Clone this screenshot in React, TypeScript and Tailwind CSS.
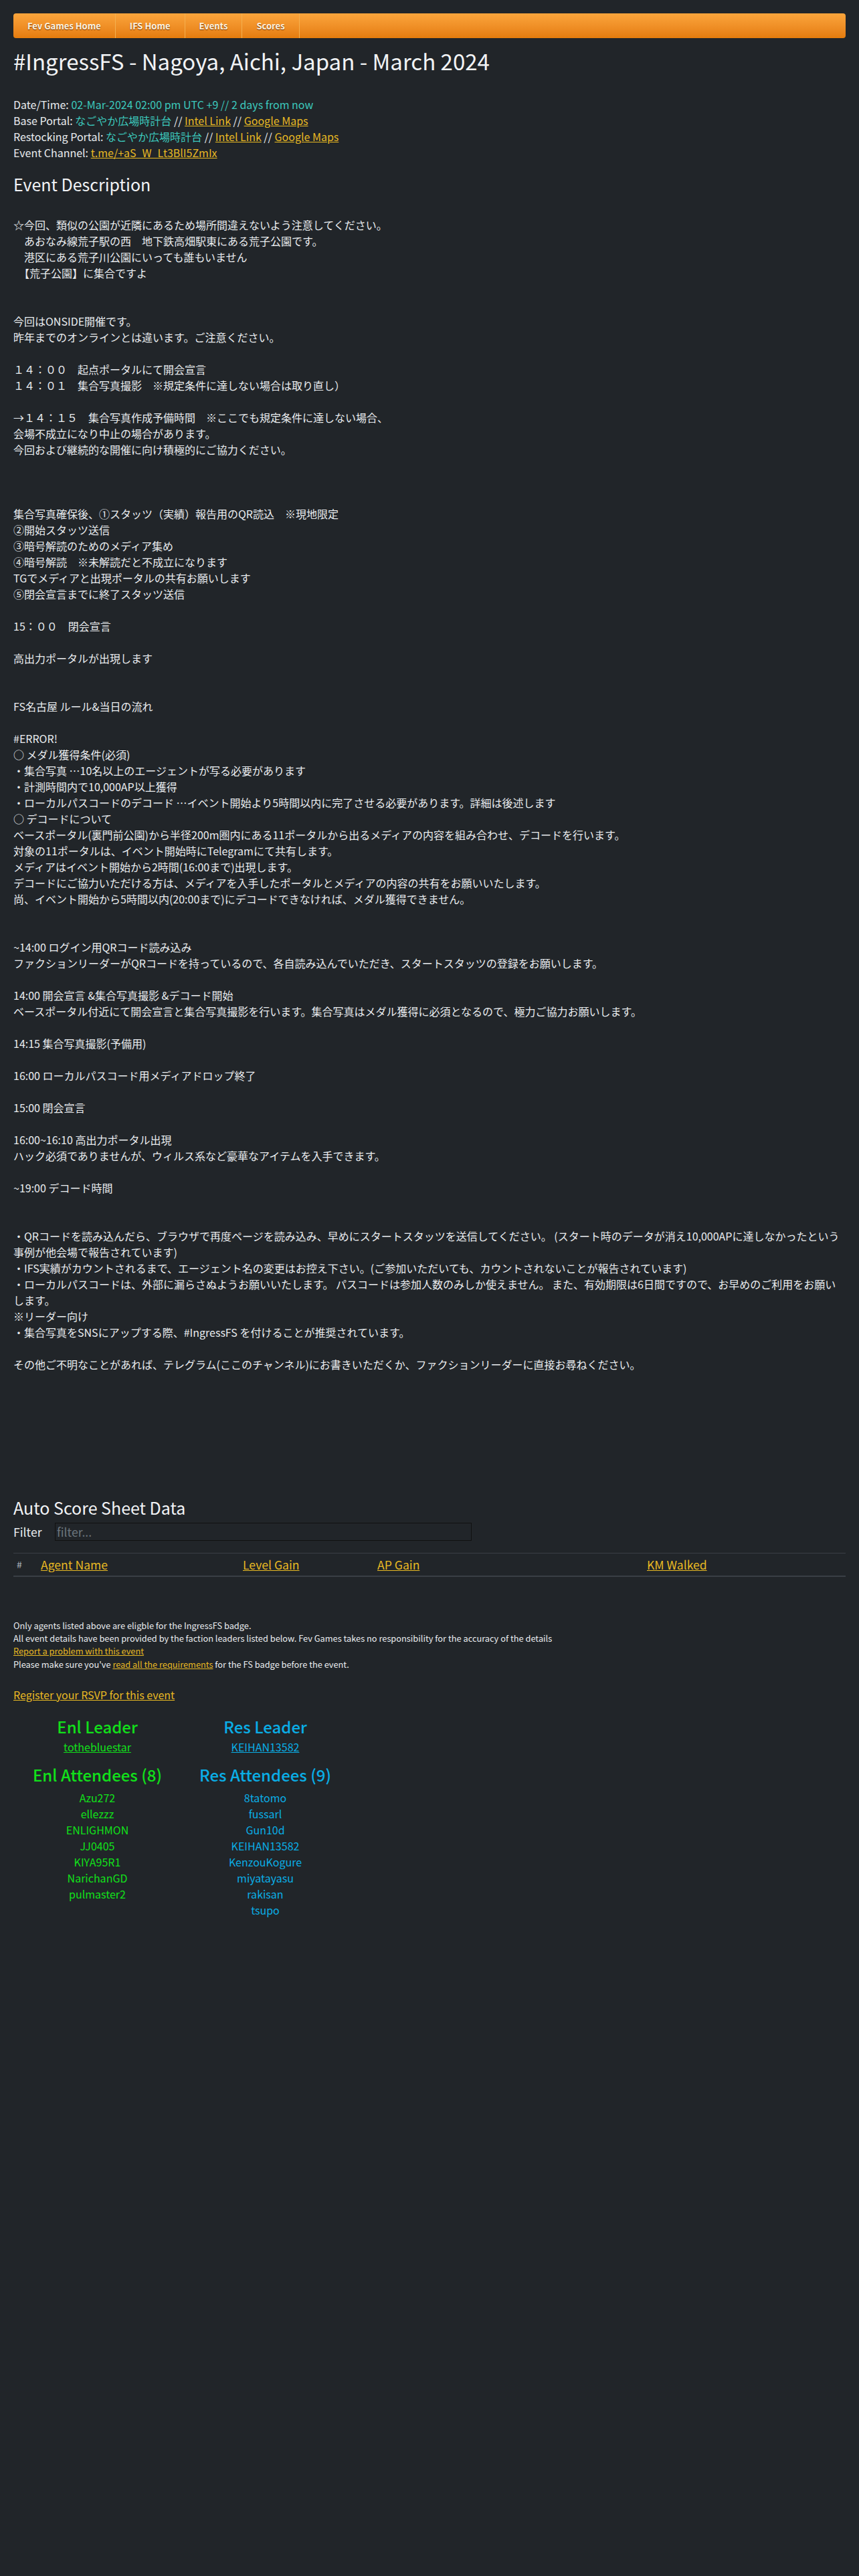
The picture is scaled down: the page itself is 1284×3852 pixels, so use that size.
import React from "react";

const desc: string[] = [
  "",
  "☆今回、類似の公園が近隣にあるため場所間違えないよう注意してください。",
  "　あおなみ線荒子駅の西　地下鉄高畑駅東にある荒子公園です。",
  "　港区にある荒子川公園にいっても誰もいません",
  "　【荒子公園】に集合ですよ",
  "",
  "",
  "今回はONSIDE開催です。",
  "昨年までのオンラインとは違います。ご注意ください。",
  "",
  "１４：００　起点ポータルにて開会宣言",
  "１４：０１　集合写真撮影　※規定条件に達しない場合は取り直し）",
  "",
  "→１４：１５　集合写真作成予備時間　※ここでも規定条件に達しない場合、",
  "会場不成立になり中止の場合があります。",
  "今回および継続的な開催に向け積極的にご協力ください。",
  "",
  "",
  "",
  "集合写真確保後、①スタッツ（実績）報告用のQR読込　※現地限定",
  "②開始スタッツ送信",
  "③暗号解読のためのメディア集め",
  "④暗号解読　※未解読だと不成立になります",
  "TGでメディアと出現ポータルの共有お願いします",
  "⑤閉会宣言までに終了スタッツ送信",
  "",
  "15：００　閉会宣言",
  "",
  "高出力ポータルが出現します",
  "",
  "",
  "FS名古屋 ルール&当日の流れ",
  "",
  "#ERROR!",
  "○ メダル獲得条件(必須)",
  "・集合写真 …10名以上のエージェントが写る必要があります",
  "・計測時間内で10,000AP以上獲得",
  "・ローカルパスコードのデコード …イベント開始より5時間以内に完了させる必要があります。詳細は後述します",
  "○ デコードについて",
  "ベースポータル(裏門前公園)から半径200m圏内にある11ポータルから出るメディアの内容を組み合わせ、デコードを行います。",
  "対象の11ポータルは、イベント開始時にTelegramにて共有します。",
  "メディアはイベント開始から2時間(16:00まで)出現します。",
  "デコードにご協力いただける方は、メディアを入手したポータルとメディアの内容の共有をお願いいたします。",
  "尚、イベント開始から5時間以内(20:00まで)にデコードできなければ、メダル獲得できません。",
  "",
  "",
  "~14:00 ログイン用QRコード読み込み",
  "ファクションリーダーがQRコードを持っているので、各自読み込んでいただき、スタートスタッツの登録をお願いします。",
  "",
  "14:00 開会宣言 &集合写真撮影 &デコード開始",
  "ベースポータル付近にて開会宣言と集合写真撮影を行います。集合写真はメダル獲得に必須となるので、極力ご協力お願いします。",
  "",
  "14:15 集合写真撮影(予備用)",
  "",
  "16:00 ローカルパスコード用メディアドロップ終了",
  "",
  "15:00 閉会宣言",
  "",
  "16:00~16:10 高出力ポータル出現",
  "ハック必須でありませんが、ウィルス系など豪華なアイテムを入手できます。",
  "",
  "~19:00 デコード時間",
  "",
  "",
  "・QRコードを読み込んだら、ブラウザで再度ページを読み込み、早めにスタートスタッツを送信してください。 (スタート時のデータが消え10,000APに達しなかったという",
  "事例が他会場で報告されています)",
  "・IFS実績がカウントされるまで、エージェント名の変更はお控え下さい。(ご参加いただいても、カウントされないことが報告されています)",
  "・ローカルパスコードは、外部に漏らさぬようお願いいたします。 パスコードは参加人数のみしか使えません。 また、有効期限は6日間ですので、お早めのご利用をお願い",
  "します。",
  "※リーダー向け",
  "・集合写真をSNSにアップする際、#IngressFS を付けることが推奨されています。",
  "",
  "その他ご不明なことがあれば、テレグラム(ここのチャンネル)にお書きいただくか、ファクションリーダーに直接お尋ねください。",
];

const enl = ["Azu272", "ellezzz", "ENLIGHMON", "JJ0405", "KIYA95R1", "NarichanGD", "pulmaster2"];
const res = ["8tatomo", "fussarl", "Gun10d", "KEIHAN13582", "KenzouKogure", "miyatayasu", "rakisan", "tsupo"];

const navItems = ["Fev Games Home", "IFS Home", "Events", "Scores"];

export default function App() {
  return (
    <div className="min-h-[3852px] w-full bg-[#212529] px-5 pt-5 pb-10 text-[16px] leading-6 text-[#e9ecef] font-['Noto_Sans_CJK_JP','Liberation_Sans',sans-serif]">
      <nav className="flex h-[37px] rounded-[4px] bg-linear-to-b from-[#fba53b] to-[#e57c0c]">
        {navItems.map((n) => (
          <a
            key={n}
            className="flex items-center border-r border-[#f4b04f] px-[21px] text-[13px] font-bold text-[#fff4e0] [text-shadow:0_1px_1px_rgba(80,30,0,0.8)]"
          >
            {n}
          </a>
        ))}
      </nav>

      <h1 className="mt-[10px] mb-[29px] text-[33px] leading-[48px] font-normal text-[#f1f3f5]">
        #IngressFS - Nagoya, Aichi, Japan - March 2024
      </h1>

      <div>
        <div>
          Date/Time: <span className="text-[#3cc9bd]">02-Mar-2024 02:00 pm UTC +9 // 2 days from now</span>
        </div>
        <div>
          Base Portal: <span className="text-[#3cc9bd]">なごやか広場時計台</span> //{" "}
          <a className="text-[#e8b923] underline">Intel Link</a> //{" "}
          <a className="text-[#e8b923] underline">Google Maps</a>
        </div>
        <div>
          Restocking Portal: <span className="text-[#3cc9bd]">なごやか広場時計台</span> //{" "}
          <a className="text-[#e8b923] underline">Intel Link</a> //{" "}
          <a className="text-[#e8b923] underline">Google Maps</a>
        </div>
        <div>
          Event Channel: <a className="text-[#e8b923] underline">t.me/+aS_W_Lt3BlI5ZmIx</a>
        </div>
      </div>

      <h3 className="mt-[18px] mb-2 text-[25px] leading-[34px] font-normal text-[#f1f3f5]">Event Description</h3>

      <div className="whitespace-pre">
        {desc.map((l, i) => (
          <div key={i} className="h-6">
            {l}
          </div>
        ))}
      </div>

      <h3 className="mt-[185px] text-[25px] leading-[34px] font-normal text-[#f1f3f5]">Auto Score Sheet Data</h3>

      <div className="mt-[6px] flex items-center">
        <label className="w-[62px] text-[17.6px]">Filter</label>
        <input
          placeholder="filter..."
          className="h-[27px] w-[623px] border border-[#111] bg-transparent px-[2px] text-[17.6px] text-[#dee2e6] placeholder:text-[#6c757d] outline-none"
        />
      </div>

      <table className="mt-[18px] w-full border-collapse text-left">
        <thead>
          <tr className="border-t border-b-2 border-t-[#3a3f45] border-b-[#3a3f45]">
            <th className="w-[33px] py-1 pl-[5px] text-[14px] leading-[25px] font-normal text-[#adb5bd]">#</th>
            <th className="w-[302px] py-1 pl-2 text-[17.6px] leading-[25px] font-normal">
              <a className="text-[#e8b923] underline">Agent Name</a>
            </th>
            <th className="w-[201px] py-1 pl-2 text-[17.6px] leading-[25px] font-normal">
              <a className="text-[#e8b923] underline">Level Gain</a>
            </th>
            <th className="w-[403px] py-1 pl-2 text-[17.6px] leading-[25px] font-normal">
              <a className="text-[#e8b923] underline">AP Gain</a>
            </th>
            <th className="py-1 pl-2 text-[17.6px] leading-[25px] font-normal">
              <a className="text-[#e8b923] underline">KM Walked</a>
            </th>
          </tr>
        </thead>
        <tbody></tbody>
      </table>

      <div className="mt-[63px] text-[12.8px] leading-[19.2px]">
        <div>Only agents listed above are eligble for the IngressFS badge.</div>
        <div>
          All event details have been provided by the faction leaders listed below. Fev Games takes no responsibility for the
          accuracy of the details
        </div>
        <div>
          <a className="text-[#e8b923] underline">Report a problem with this event</a>
        </div>
        <div>
          Please make sure you've <a className="text-[#e8b923] underline">read all the requirements</a> for the FS badge before
          the event.
        </div>
      </div>

      <div className="mt-6 text-[16px] leading-6">
        <a className="text-[#e8b923] underline">Register your RSVP for this event</a>
      </div>

      <div className="mt-[19px] flex">
        <div className="flex w-[251px] flex-col items-center text-[#11e01a]">
          <h3 className="text-[24px] leading-[34px] font-medium">Enl Leader</h3>
          <a className="mt-px text-[16px] leading-6 underline">tothebluestar</a>
          <h3 className="mt-[13px] text-[24px] leading-[34px] font-medium">Enl Attendees (8)</h3>
          <div className="mt-[5px] flex flex-col items-center text-[16px] leading-6">
            {enl.map((n) => (
              <div key={n}>{n}</div>
            ))}
          </div>
        </div>
        <div className="flex w-[251px] flex-col items-center text-[#0aaee6]">
          <h3 className="text-[24px] leading-[34px] font-medium">Res Leader</h3>
          <a className="mt-px text-[16px] leading-6 underline">KEIHAN13582</a>
          <h3 className="mt-[13px] text-[24px] leading-[34px] font-medium">Res Attendees (9)</h3>
          <div className="mt-[5px] flex flex-col items-center text-[16px] leading-6">
            {res.map((n) => (
              <div key={n}>{n}</div>
            ))}
          </div>
        </div>
      </div>
    </div>
  );
}
